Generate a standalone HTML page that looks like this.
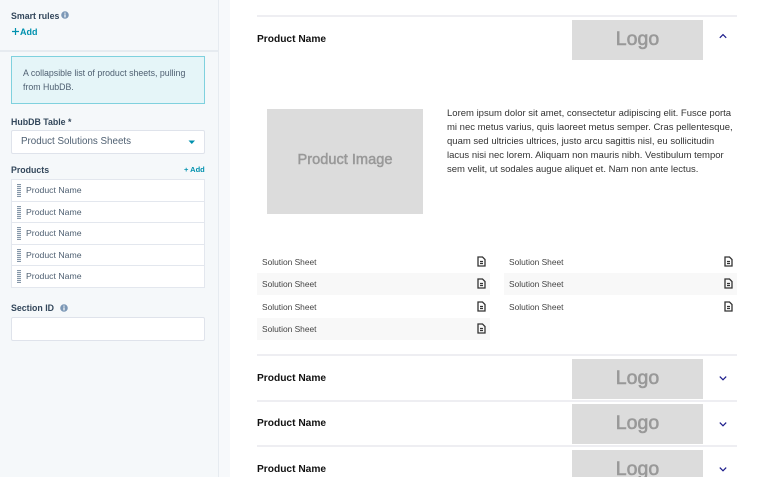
<!DOCTYPE html>
<html><head><meta charset="utf-8"><style>
html,body{margin:0;padding:0;width:768px;height:477px;overflow:hidden;background:#fff;font-family:"Liberation Sans",sans-serif}
#w{position:absolute;left:0;top:0;width:768px;height:477px;overflow:hidden;background:#fff}
.a{position:absolute;white-space:nowrap}
.box{position:absolute;box-sizing:border-box}
.lb{font-size:8.8px;font-weight:700;color:#33475b;line-height:12px}
.row{position:absolute;left:11px;width:194px;height:23px;box-sizing:border-box;background:#fff;border:1px solid #e3e7ee;font-size:8.7px;color:#4f6072;line-height:20px;padding-left:14px}
.row i{position:absolute;left:5px;top:4px;width:4px;height:13px;background:repeating-linear-gradient(#8496a8 0 1px,#eef1f4 1px 2px)}
.hr{position:absolute;left:257px;width:480px;height:2px;background:#eeeef2}
.pn{position:absolute;left:257px;font-size:10.2px;font-weight:700;color:#111;line-height:14px}
.logo{position:absolute;left:572px;width:131px;height:40px;background:#dcdcdc;color:#999;font-size:19.5px;-webkit-text-stroke:.6px #999;line-height:39px;text-align:center}
.sh{position:absolute;height:22px;font-size:8.4px;color:#444;line-height:22px;padding-left:5px;box-sizing:border-box}
.sh svg{position:absolute;right:4px;top:5px}
.chev{position:absolute;left:719px}
</style></head><body><div id="w">
<div class="box" style="left:0;top:0;width:219px;height:477px;background:#f5f8fa"></div>
<div class="box" style="left:218px;top:0;width:1px;height:477px;background:#e6ebf0"></div>
<div class="box" style="left:219px;top:0;width:11px;height:477px;background:#f7f9fb"></div>
<div class="box" style="left:0;top:50px;width:219px;height:2px;background:#e6ebf0"></div>

<div class="a lb" style="left:11px;top:10px">Smart rules</div>
<svg class="a" style="left:61px;top:11px" width="8" height="8"><circle cx="4" cy="4" r="3.8" fill="#7c98b6"/><rect x="3.4" y="3.4" width="1.2" height="3" fill="#fff"/><rect x="3.4" y="1.6" width="1.2" height="1.1" fill="#fff"/></svg>
<svg class="a" style="left:11px;top:27px" width="9" height="9"><path d="M4.5 1v7M1 4.5h7" stroke="#0091ae" stroke-width="1.2"/></svg>
<div class="a" style="left:20px;top:26px;font-size:9px;font-weight:700;color:#0091ae;line-height:12px">Add</div>

<div class="box" style="left:11px;top:56px;width:194px;height:48px;background:#e5f5f8;border:1px solid #7fd1de"></div>
<div class="a" style="left:23px;top:66px;font-size:8.8px;color:#4f6072;line-height:14px">A collapsible list of product sheets, pulling<br>from HubDB.</div>

<div class="a lb" style="left:11px;top:116px">HubDB Table *</div>
<div class="box" style="left:11px;top:130px;width:194px;height:24px;background:#fff;border:1px solid #dfe3eb;border-radius:2px"></div>
<div class="a" style="left:21px;top:135px;font-size:9.8px;color:#4f6072;line-height:14px">Product Solutions Sheets</div>
<svg class="a" style="left:188px;top:140px" width="8" height="5"><path d="M0.5 0.5h6.5L3.8 4z" fill="#0091ae"/></svg>

<div class="a lb" style="left:11px;top:164px">Products</div>
<div class="a" style="left:184px;top:164px;font-size:7.5px;font-weight:700;color:#0091ae;line-height:12px">+ Add</div>
<div class="row" style="top:179px"><i></i>Product Name</div>
<div class="row" style="top:201px"><i></i>Product Name</div>
<div class="row" style="top:222px"><i></i>Product Name</div>
<div class="row" style="top:244px"><i></i>Product Name</div>
<div class="row" style="top:265px"><i></i>Product Name</div>

<div class="a lb" style="left:11px;top:302px">Section ID</div>
<svg class="a" style="left:60px;top:304px" width="8" height="8"><circle cx="4" cy="4" r="3.8" fill="#7c98b6"/><rect x="3.4" y="3.4" width="1.2" height="3" fill="#fff"/><rect x="3.4" y="1.6" width="1.2" height="1.1" fill="#fff"/></svg>
<div class="box" style="left:11px;top:317px;width:194px;height:24px;background:#fff;border:1px solid #dfe3eb;border-radius:2px"></div>

<div class="hr" style="top:15px"></div>
<div class="pn" style="top:33px">Product Name</div>
<div class="logo" style="top:20px">Logo</div>
<svg class="chev" style="top:33px" width="8" height="6"><path d="M.8 4.8L4 1.6 7.2 4.8" fill="none" stroke="#1a1a8a" stroke-width="1.2"/></svg>

<div class="box" style="left:267px;top:109px;width:156px;height:105px;background:#dcdcdc;color:#999;font-size:14.6px;-webkit-text-stroke:.5px #999;line-height:103px;text-align:center">Product Image</div>
<div class="a" style="left:447px;top:107px;font-size:9.5px;color:#333;line-height:14px">Lorem ipsum dolor sit amet, consectetur adipiscing elit. Fusce porta<br>mi nec metus varius, quis laoreet metus semper. Cras pellentesque,<br>quam sed ultricies ultrices, justo arcu sagittis nisl, eu sollicitudin<br>lacus nisi nec lorem. Aliquam non mauris nibh. Vestibulum tempor<br>sem velit, ut sodales augue aliquet et. Nam non ante lectus.</div>

<div class="sh" style="left:257px;top:251px;width:233px">Solution Sheet<svg width="9" height="11" viewBox="0 0 9 11"><path d="M1 1h4.5L8 3.5V10H1zM3 5.5h3M3 7.5h3" fill="none" stroke="#333" stroke-width="1.3"/></svg></div>
<div class="sh" style="left:257px;top:273px;width:233px;background:#f8f8f8">Solution Sheet<svg width="9" height="11" viewBox="0 0 9 11"><path d="M1 1h4.5L8 3.5V10H1zM3 5.5h3M3 7.5h3" fill="none" stroke="#333" stroke-width="1.3"/></svg></div>
<div class="sh" style="left:257px;top:296px;width:233px">Solution Sheet<svg width="9" height="11" viewBox="0 0 9 11"><path d="M1 1h4.5L8 3.5V10H1zM3 5.5h3M3 7.5h3" fill="none" stroke="#333" stroke-width="1.3"/></svg></div>
<div class="sh" style="left:257px;top:318px;width:233px;background:#f8f8f8">Solution Sheet<svg width="9" height="11" viewBox="0 0 9 11"><path d="M1 1h4.5L8 3.5V10H1zM3 5.5h3M3 7.5h3" fill="none" stroke="#333" stroke-width="1.3"/></svg></div>
<div class="sh" style="left:504px;top:251px;width:233px">Solution Sheet<svg width="9" height="11" viewBox="0 0 9 11"><path d="M1 1h4.5L8 3.5V10H1zM3 5.5h3M3 7.5h3" fill="none" stroke="#333" stroke-width="1.3"/></svg></div>
<div class="sh" style="left:504px;top:273px;width:233px;background:#f8f8f8">Solution Sheet<svg width="9" height="11" viewBox="0 0 9 11"><path d="M1 1h4.5L8 3.5V10H1zM3 5.5h3M3 7.5h3" fill="none" stroke="#333" stroke-width="1.3"/></svg></div>
<div class="sh" style="left:504px;top:296px;width:233px">Solution Sheet<svg width="9" height="11" viewBox="0 0 9 11"><path d="M1 1h4.5L8 3.5V10H1zM3 5.5h3M3 7.5h3" fill="none" stroke="#333" stroke-width="1.3"/></svg></div>

<div class="hr" style="top:354px"></div>
<div class="pn" style="top:372px">Product Name</div>
<div class="logo" style="top:359px">Logo</div>
<svg class="chev" style="top:375px" width="8" height="6"><path d="M.8 1.6L4 4.8 7.2 1.6" fill="none" stroke="#1a1a8a" stroke-width="1.2"/></svg>

<div class="hr" style="top:400px"></div>
<div class="pn" style="top:417px">Product Name</div>
<div class="logo" style="top:404px">Logo</div>
<svg class="chev" style="top:421px" width="8" height="6"><path d="M.8 1.6L4 4.8 7.2 1.6" fill="none" stroke="#1a1a8a" stroke-width="1.2"/></svg>

<div class="hr" style="top:445px"></div>
<div class="pn" style="top:463px">Product Name</div>
<div class="logo" style="top:450px">Logo</div>
<svg class="chev" style="top:466px" width="8" height="6"><path d="M.8 1.6L4 4.8 7.2 1.6" fill="none" stroke="#1a1a8a" stroke-width="1.2"/></svg>
</div></body></html>
